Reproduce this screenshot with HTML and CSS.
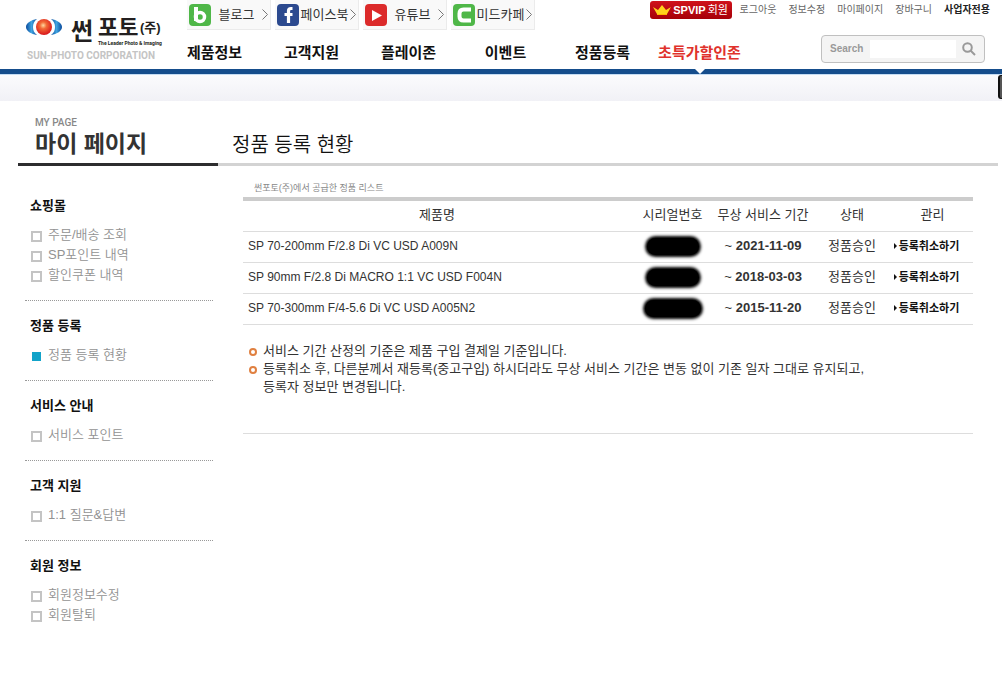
FILE: index.html
```html
<!DOCTYPE html>
<html lang="ko">
<head>
    <meta charset="UTF-8">
    <meta name="viewport" content="width=device-width, initial-scale=1.0">
    <title>썬포토(주) - 마이 페이지</title>
    <link rel="stylesheet" href="styles.css">
</head>
<body>
    <header class="header">
        <a href="#" class="logo">
            <svg width="138" height="48" viewBox="0 0 138 48" role="img" aria-label="썬포토(주)">
                <defs>
                    <radialGradient id="sun" cx="45%" cy="40%" r="60%">
                        <stop offset="0" stop-color="#ffd9a0"/>
                        <stop offset="0.35" stop-color="#f26a36"/>
                        <stop offset="1" stop-color="#d8151c"/>
                    </radialGradient>
                    <linearGradient id="wing" x1="0" x2="1">
                        <stop offset="0" stop-color="#0a4a9c"/>
                        <stop offset="0.5" stop-color="#3fa3e0"/>
                        <stop offset="1" stop-color="#0a4a9c"/>
                    </linearGradient>
                </defs>
                <path d="M11 4C5 5 0 8 0 12s5 7 11 8c-3-2-4-5-4-8s1-6 4-8z" fill="url(#wing)"/>
                <path d="M25 4c6 1 11 4 11 8s-5 7-11 8c3-2 4-5 4-8s-1-6-4-8z" fill="url(#wing)"/>
                <circle cx="18" cy="12" r="8" fill="url(#sun)"/>
                <text x="45" y="25" class="logo-big">썬</text>
                <text x="72" y="20" class="logo-mid">포토</text>
                <text x="114" y="17" class="logo-small">(주)</text>
                <text x="72" y="30" class="logo-tag">The Leader Photo &amp; Imaging</text>
                <text x="1" y="44" class="logo-corp">SUN-PHOTO CORPORATION</text>
            </svg>
        </a>
        <div class="header-main">
            <div class="top-row">
                <ul class="social">
                    <li><a href="#">
                        <svg width="22" height="22" viewBox="1 1 22 22"><rect x="1" y="1" width="22" height="22" rx="4" fill="#4fb748"/><path d="M8 4v14" stroke="#fff" stroke-width="4"/><circle cx="12" cy="14" r="4.5" fill="none" stroke="#fff" stroke-width="3.5"/></svg>
                        <span>블로그</span>
                        <svg class="chevron" width="6" height="11" viewBox="0 0 6 11"><path d="M.5 .5l5 5-5 5"/></svg>
                    </a></li>
                    <li><a href="#">
                        <svg width="22" height="22" viewBox="1 1 22 22"><rect x="1" y="1" width="22" height="22" rx="4" fill="#2c4a8f"/><path d="M16.500 5.500H15q-2.500 0-2.500 2.500v12M8.500 11.500h8" fill="none" stroke="#fff" stroke-width="3.200"/></svg>
                        <span>페이스북</span>
                        <svg class="chevron" width="6" height="11" viewBox="0 0 6 11"><path d="M.5 .5l5 5-5 5"/></svg>
                    </a></li>
                    <li><a href="#">
                        <svg width="22" height="22" viewBox="1 1 22 22"><rect x="1" y="1" width="22" height="22" rx="4" fill="#dc2b2b"/><path d="M8 7l10 5.500-10 5.500z" fill="#fff"/></svg>
                        <span>유튜브</span>
                        <svg class="chevron" width="6" height="11" viewBox="0 0 6 11"><path d="M.5 .5l5 5-5 5"/></svg>
                    </a></li>
                    <li><a href="#">
                        <svg width="22" height="22" viewBox="1 1 22 22"><rect x="1" y="1" width="22" height="22" rx="4" fill="#4fb748"/><path d="M19 6.500h-7.500q-4 0-4 4v3q0 4 4 4H19" fill="none" stroke="#fff" stroke-width="4"/></svg>
                        <span>미드카페</span>
                        <svg class="chevron" width="6" height="11" viewBox="0 0 6 11"><path d="M.5 .5l5 5-5 5"/></svg>
                    </a></li>
                </ul>
                <div class="user-menu">
                    <a href="#" class="vip">
                        <svg width="18" height="10" viewBox="0 0 18 10"><path d="M0 2l5 3 4-5 4 5 5-3-4 7H4z" fill="#ffd21c"/><path d="M4 9.500h10" stroke="#ffb400"/></svg>
                        <b>SPVIP</b>회원
                    </a>
                    <a href="#">로그아웃</a>
                    <a href="#">정보수정</a>
                    <a href="#">마이페이지</a>
                    <a href="#">장바구니</a>
                    <a href="#" class="biz">사업자전용</a>
                </div>
            </div>
            <div class="nav-row">
                <nav class="gnb">
                    <a href="#">제품정보</a>
                    <a href="#">고객지원</a>
                    <a href="#">플레이존</a>
                    <a href="#">이벤트</a>
                    <a href="#">정품등록</a>
                    <a href="#" class="hot">초특가할인존</a>
                </nav>
                <form class="search">
                    <label for="q">Search</label>
                    <input type="text" id="q">
                    <button type="submit" aria-label="검색">
                        <svg width="14" height="14" viewBox="0 0 14 14"><circle cx="5.500" cy="5.500" r="4.300"/><path d="M8.500 8.500l4.500 4.500"/></svg>
                    </button>
                </form>
            </div>
        </div>
    </header>
    <div class="band"><span class="quick-tab"></span></div>

    <div class="page">
        <aside class="sidebar">
            <div class="side-title">
                <span>MY PAGE</span>
                <h2>마이 페이지</h2>
            </div>
            <div class="side-group">
                <h3>쇼핑몰</h3>
                <ul>
                    <li><a href="#">주문/배송 조회</a></li>
                    <li><a href="#">SP포인트 내역</a></li>
                    <li><a href="#">할인쿠폰 내역</a></li>
                </ul>
            </div>
            <div class="side-group">
                <h3>정품 등록</h3>
                <ul>
                    <li class="on"><a href="#">정품 등록 현황</a></li>
                </ul>
            </div>
            <div class="side-group">
                <h3>서비스 안내</h3>
                <ul>
                    <li><a href="#">서비스 포인트</a></li>
                </ul>
            </div>
            <div class="side-group">
                <h3>고객 지원</h3>
                <ul>
                    <li><a href="#">1:1 질문&amp;답변</a></li>
                </ul>
            </div>
            <div class="side-group">
                <h3>회원 정보</h3>
                <ul>
                    <li><a href="#">회원정보수정</a></li>
                    <li><a href="#">회원탈퇴</a></li>
                </ul>
            </div>
        </aside>

        <main class="content">
            <h1>정품 등록 현황</h1>
            <div class="content-body">
                <p class="list-title">썬포토(주)에서 공급한 정품 리스트</p>
                <table class="list">
                    <thead>
                        <tr>
                            <th class="col-name">제품명</th>
                            <th class="col-serial">시리얼번호</th>
                            <th class="col-period">무상 서비스 기간</th>
                            <th class="col-status">상태</th>
                            <th class="col-manage">관리</th>
                        </tr>
                    </thead>
                    <tbody>
                        <tr>
                            <td class="name">SP 70-200mm F/2.8 Di VC USD A009N</td>
                            <td><span class="mask"></span></td>
                            <td>~ <b>2021-11-09</b></td>
                            <td>정품승인</td>
                            <td><a href="#" class="cancel">등록취소하기</a></td>
                        </tr>
                        <tr>
                            <td class="name">SP 90mm F/2.8 Di MACRO 1:1 VC USD F004N</td>
                            <td><span class="mask"></span></td>
                            <td>~ <b>2018-03-03</b></td>
                            <td>정품승인</td>
                            <td><a href="#" class="cancel">등록취소하기</a></td>
                        </tr>
                        <tr>
                            <td class="name">SP 70-300mm F/4-5.6 Di VC USD A005N2</td>
                            <td><span class="mask wide"></span></td>
                            <td>~ <b>2015-11-20</b></td>
                            <td>정품승인</td>
                            <td><a href="#" class="cancel">등록취소하기</a></td>
                        </tr>
                    </tbody>
                </table>
                <ul class="notes">
                    <li>서비스 기간 산정의 기준은 제품 구입 결제일 기준입니다.</li>
                    <li>등록취소 후, 다른분께서 재등록(중고구입) 하시더라도 무상 서비스 기간은 변동 없이 기존 일자 그대로 유지되고,<br>등록자 정보만 변경됩니다.</li>
                </ul>
            </div>
        </main>
    </div>
</body>
</html>
```

FILE: styles.css
```css
*, *::before, *::after { box-sizing: border-box; }
body { margin: 0; background: #fff; color: #333; font-family: "Liberation Sans", "Noto Sans CJK KR", sans-serif; font-size: 13px; line-height: 18px; }
a { color: inherit; text-decoration: none; }
ul { list-style: none; margin: 0; padding: 0; }
h1, h2, h3, p { margin: 0; }

/* header */
.header { display: flex; border-bottom: 5px solid #154d8c; }
.logo { width: 166px; padding: 15px 0 0 26px; flex-shrink: 0; }
.logo svg { display: block; }
.logo text { font-weight: bold; fill: #231f20; }
.logo .logo-big { font-size: 24px; }
.logo .logo-mid { font-size: 22px; }
.logo .logo-small { font-size: 13px; }
.logo .logo-tag { font-family: Roboto, sans-serif; font-size: 5px; }
.logo .logo-corp { font-family: Roboto, sans-serif; font-size: 10px; fill: #c4c4c4; }
.header-main { flex: 1; }
.top-row { display: flex; justify-content: space-between; height: 30px; padding: 0 12px 0 21px; }
.social { display: flex; gap: 4px; }
.social a { display: flex; align-items: center; justify-content: space-between; width: 84px; height: 30px; padding: 0 2px; background: #f9f9f9; border: solid #ebebeb; border-width: 0 1px 1px 0; white-space: nowrap; }
.social span { flex: 1; text-align: center; }
.chevron path { fill: none; stroke: #777; }
.user-menu { display: flex; gap: 12px; font-size: 10px; line-height: 20px; color: #666; white-space: nowrap; }
.user-menu .biz { color: #222; font-weight: bold; }
.vip { display: flex; align-items: center; justify-content: center; gap: 2px; width: 82px; height: 18px; margin: 1px -4px 0 0; background: linear-gradient(#d0121b, #a60008); border-radius: 3px; color: #fff; font-size: 11px; }
.nav-row { display: flex; justify-content: space-between; height: 39px; padding-right: 17px; }
.gnb { display: flex; }
.gnb a { position: relative; width: 97px; padding-top: 3px; text-align: center; font-size: 15px; font-weight: bold; line-height: 40px; color: #111; white-space: nowrap; }
.gnb .hot { color: #e0322c; }
.gnb .hot::after { content: ""; position: absolute; top: 39px; left: 50%; margin-left: -5px; border: solid transparent; border-width: 5px 5px 0; border-top-color: #fff; }
.search { display: flex; align-items: center; width: 164px; height: 28px; margin-top: 5px; padding: 0 8px; background: #f4f4f4; border: 1px solid #c0c0c0; border-radius: 4px; }
.search label { width: 40px; font-size: 10px; font-weight: bold; color: #999; }
.search input { width: 86px; height: 18px; padding: 0 4px; border: 0; background: #fff; font-size: 12px; }
.search button { display: flex; margin-left: auto; padding: 0; border: 0; background: none; cursor: pointer; }
.search svg { fill: none; stroke: #999; stroke-width: 2; }
.band { position: relative; height: 27px; border-top: 1px solid #c5dcf3; background: linear-gradient(#fbfbfd, #f1f1f6); }
.quick-tab { position: absolute; right: 0; top: 0; width: 4px; height: 24px; background: #555; border: solid #111; border-width: 1px 0 1px 2px; border-radius: 3px 0 0 3px; }

/* layout */
.page { display: flex; padding: 0 4px 0 18px; }
.sidebar { width: 200px; flex-shrink: 0; }
.content { flex: 1; }
.side-title { height: 65px; padding: 15px 0 0 17px; border-bottom: 3px solid #2d2d2f; }
.side-title span { display: block; font-family: Roboto, sans-serif; font-size: 10px; font-weight: 500; line-height: 14px; color: #888; }
.side-title h2 { font-size: 23px; line-height: 28px; color: #333; }

/* side menu */
.side-group { margin: 0 5px 0 7px; padding: 15px 0 15px 5px; border-bottom: 1px dotted #999; }
.side-title + .side-group { padding-top: 30px; }
.side-group:last-child { border-bottom: 0; }
.side-group h3 { margin-bottom: 9px; font-size: 13px; line-height: 20px; color: #111; }
.side-group li { display: flex; align-items: center; gap: 6px; padding-left: 1px; line-height: 20px; color: #929292; font-weight: 350; }
.side-group li::before { content: ""; width: 11px; height: 11px; margin-top: 3px; border: 2px solid #c4c4c4; }
.side-group .on::before { border: 1px solid #fff; background: #12a3c9; }

/* content */
.content h1 { height: 65px; padding: 29px 0 0 14px; border-bottom: 3px solid #d3d3d3; font-size: 20px; font-weight: 350; line-height: 30px; color: #111; }
.content-body { margin: 0 25px; padding-bottom: 37px; border-bottom: 1px solid #ddd; }
.list-title { padding: 13px 0 0 11px; font-size: 9px; color: #888; }
.list { width: 100%; border-collapse: collapse; table-layout: fixed; border-top: 4px solid #ccc; text-align: center; }
.list th, .list td { height: 31px; padding: 0 0 2px; border-bottom: 1px solid #ddd; font-weight: normal; white-space: nowrap; }
.list th { height: 32px; }
.list .col-serial { width: 83px; }
.list .col-period { width: 98px; }
.list .col-status { width: 80px; }
.list .col-manage { width: 81px; }
.list .name { padding-left: 5px; text-align: left; font-size: 12px; }
.mask { display: block; width: 52px; height: 17px; margin: 2px auto 0; background: #000; border-radius: 9px; box-shadow: 0 0 3px 2px #000; }
.mask.wide { width: 56px; }
.cancel { display: flex; align-items: center; justify-content: center; gap: 2px; padding-right: 12px; font-size: 11px; font-weight: bold; color: #111; }
.cancel::before { content: ""; border: solid transparent; border-width: 3px 0 3px 3px; border-left-color: #111; }
.notes { padding-top: 17px; }
.notes li { display: grid; grid-template-columns: 8px 1fr; column-gap: 6px; padding-left: 6px; }
.notes li::before { content: ""; width: 8px; height: 8px; margin-top: 6px; border: 2px solid #e08040; border-radius: 50%; }
```
